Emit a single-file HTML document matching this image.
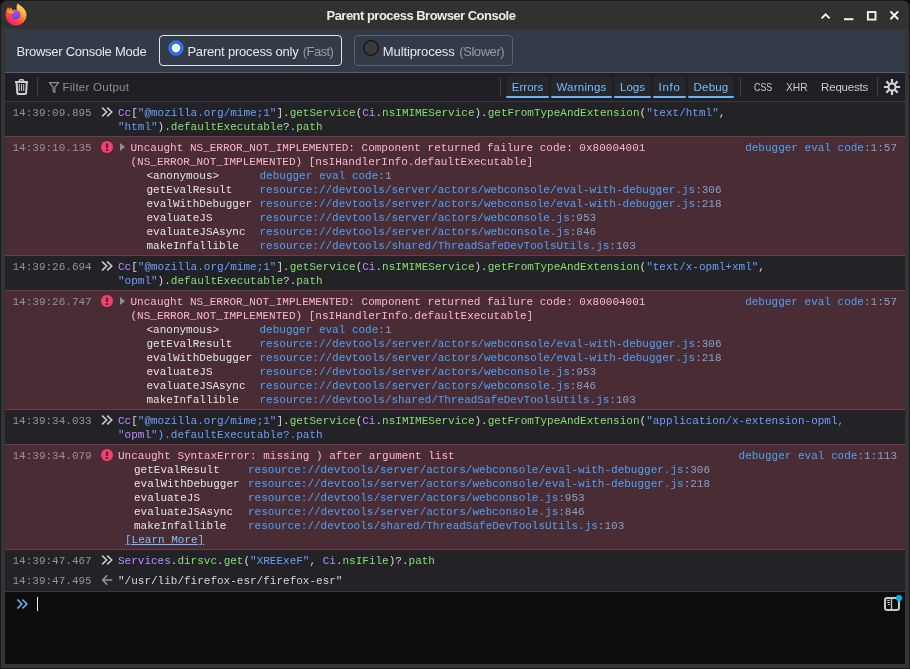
<!DOCTYPE html>
<html><head><meta charset="utf-8">
<style>
html,body{margin:0;padding:0;}
body{width:910px;height:669px;overflow:hidden;position:relative;background:#0a0a0a;font-family:"Liberation Sans",sans-serif;}
#win{position:absolute;left:0;top:0;width:910px;height:669px;box-sizing:border-box;border:1px solid #1b1b1b;border-radius:7px 7px 0 0;background:#353535;}
#title{position:absolute;left:1px;top:1px;width:908px;height:28px;background:#313131;border-radius:6px 6px 0 0;}
#ttext{position:absolute;left:325.5px;top:6.5px;line-height:16px;font-weight:bold;font-size:13px;letter-spacing:-0.52px;color:#ececec;white-space:nowrap;}
#content{position:absolute;left:5px;top:29px;width:900px;height:635px;background:#232327;overflow:hidden;}
#mode{position:absolute;left:0;top:0;width:900px;height:43px;background:#333a48;border-bottom:1px solid #575c69;}
#mode .lbl{position:absolute;left:11.5px;top:14.5px;line-height:16px;font-size:13px;letter-spacing:-0.26px;color:#e8e8ea;white-space:nowrap;}
.mbtn{position:absolute;top:6px;height:31px;box-sizing:border-box;border:1px solid #e6e6e6;border-radius:4px;}
.mbtn .t{position:absolute;top:7.5px;line-height:16px;font-size:13px;color:#e8e8ea;white-space:nowrap;}
.mbtn .g{color:#9a9ca3;}
#toolbar{position:absolute;left:0;top:44px;width:900px;height:28px;background:#201f25;border-bottom:1px solid #38383d;}
.tsep{position:absolute;top:4px;width:1px;height:20px;background:#3c3c41;}
.fbtn{position:absolute;top:3px;height:22px;box-sizing:border-box;background:#26262d;border-radius:3px 3px 1px 1px;color:#75bfff;font-size:11.5px;}
.fbtn:after{content:"";position:absolute;left:0;right:0;bottom:0;height:2px;background:#6db3f2;border-radius:1px;}
.fbtn span{position:absolute;left:0;right:0;text-align:center;top:4px;line-height:14px;white-space:nowrap;}
.tbt{position:absolute;top:7px;line-height:14px;font-size:11.5px;color:#c9c9cc;white-space:nowrap;}
#msgs{position:absolute;left:-5px;top:-29px;width:910px;height:669px;}
.ln{position:absolute;white-space:pre;font-family:"Liberation Mono",monospace;font-size:11px;line-height:14px;height:14px;color:#d7d7db;}
.ts{color:#939395;}
.v{color:#b98eff;}
.p{color:#d7d7db;}
.s{color:#6d9ef7;}
.f{color:#86de74;}
.fn{color:#e4e4e6;}
.loc{color:#4ea1f5;}
.lnum{color:#86a0c8;}
.err{color:#ffb3d2;}
.res{color:#d7d7db;}
.lm{color:#75bfff;text-decoration:underline;}
.ico{position:absolute;}
.errbg{position:absolute;left:5px;width:900px;box-sizing:border-box;background:#4a2c35;border-top:1px solid #6f3b4c;border-bottom:1px solid #6f3b4c;}
.eico{position:absolute;width:12px;height:12px;border-radius:50%;background:#ff3d6e;color:#4a2c35;font:bold 10px/12px "Liberation Sans",sans-serif;text-align:center;}
.tri{position:absolute;width:0;height:0;border-left:5px solid #8e8e90;border-top:4px solid transparent;border-bottom:4px solid transparent;}
#sepbot{position:absolute;left:5px;top:591px;width:900px;height:1px;background:#3a3a3e;}
#input{position:absolute;left:5px;top:592px;width:900px;height:72px;background:#0d0d0e;}
</style></head><body>
<div id="root" style="position:absolute;left:0;top:0;width:910px;height:669px;will-change:transform">
<div id="win"></div>
<div id="title">
  <svg style="position:absolute;left:-1px;top:-1px" width="32" height="30" viewBox="0 0 32 30">
    <defs>
      <linearGradient id="fg1" x1="0.85" y1="0" x2="0.2" y2="1"><stop offset="0" stop-color="#fff44f"/><stop offset="0.38" stop-color="#ffa12e"/><stop offset="0.68" stop-color="#ff4539"/><stop offset="1" stop-color="#e4158c"/></linearGradient>
      <linearGradient id="fg2" x1="0.3" y1="0" x2="0.5" y2="1"><stop offset="0" stop-color="#b13ff0"/><stop offset="0.5" stop-color="#8a4cf5"/><stop offset="1" stop-color="#5945dc"/></linearGradient>
    </defs>
    <path d="M17.8 3.6 C19.5 5.5 26.5 8.5 26.5 15.2 A10.5 10.5 0 0 1 5.5 15.2 C5.5 12 6.8 9.5 8 7 L9.3 9 L11.2 7.4 L12.4 10.2 C13.5 9.6 15.3 9.6 16.9 9.8 C16.4 7.5 16.6 5.2 17.8 3.6 Z" fill="url(#fg1)"/>
    <circle cx="15.8" cy="14.8" r="4.6" fill="url(#fg2)"/>
    <path d="M6.6 10.6 C9 10.2 12 11 14.6 12.3 C13.4 13.7 11.4 14 10 13.4 C8.5 12.8 7.4 11.9 6.6 10.6 Z" fill="#ff9d1e"/>
  </svg>
  <div id="ttext">Parent process Browser Console</div>
  <svg style="position:absolute;left:819px;top:10px" width="80" height="11" viewBox="0 0 80 11">
    <path d="M1.6 7.4 L5.6 3.4 L9.6 7.4" fill="none" stroke="#f2f2f2" stroke-width="2"/>
    <rect x="24" y="7.2" width="9.4" height="2" fill="#f2f2f2"/>
    <rect x="47.9" y="1.0" width="7.6" height="7.6" fill="none" stroke="#f2f2f2" stroke-width="1.9"/>
    <path d="M70.4 0.4 L78.2 8.2 M78.2 0.4 L70.4 8.2" fill="none" stroke="#f2f2f2" stroke-width="2"/>
  </svg>
</div>
<div id="content">
  <div id="mode">
    <div class="lbl">Browser Console Mode</div>
    <div class="mbtn" style="left:154px;width:183px;">
      <svg style="position:absolute;left:8px;top:4px" width="16" height="16" viewBox="0 0 16 16"><circle cx="8" cy="8" r="6" fill="#fff" stroke="#2b73e0" stroke-width="3.6"/></svg>
      <div class="t" style="left:27.4px;letter-spacing:-0.2px">Parent process only</div>
      <div class="t g" style="left:142.7px;letter-spacing:-0.54px">(Fast)</div>
    </div>
    <div class="mbtn" style="left:349px;width:159px;border-color:#5c6170;">
      <svg style="position:absolute;left:8px;top:4px" width="16" height="16" viewBox="0 0 16 16"><circle cx="8" cy="8" r="7.3" fill="#3a3a3a" stroke="#111" stroke-width="1.2"/></svg>
      <div class="t" style="left:27.8px;letter-spacing:-0.1px">Multiprocess</div>
      <div class="t g" style="left:104.3px;letter-spacing:-0.44px">(Slower)</div>
    </div>
  </div>
  <div id="toolbar">
    <svg style="position:absolute;left:9px;top:5px" width="16" height="18" viewBox="0 0 16 18">
      <path d="M1 4 H14" stroke="#cfcfd2" stroke-width="2" fill="none"/>
      <path d="M5.4 3.6 V2.7 Q5.4 1.7 6.4 1.7 H8.6 Q9.6 1.7 9.6 2.7 V3.6" stroke="#cfcfd2" stroke-width="1.4" fill="none"/>
      <path d="M2.6 4 L3.2 14.4 Q3.3 16.1 5 16.1 H10.4 Q12.1 16.1 12.2 14.4 L12.8 4" stroke="#cfcfd2" stroke-width="2" fill="none"/>
      <path d="M5.3 6 V13 M7.5 6 V13 M9.7 6 V13" stroke="#cfcfd2" stroke-width="1" fill="none"/>
    </svg>
    <div class="tsep" style="left:32px"></div>
    <svg style="position:absolute;left:43px;top:8px" width="12" height="13" viewBox="0 0 12 13">
      <path d="M1.3 1.6 H10.7 L6.9 6.2 V11.4 L5.1 10.2 V6.2 Z" fill="none" stroke="#909093" stroke-width="1.2" stroke-linejoin="round"/>
    </svg>
    <div class="tbt" style="left:57.5px;color:#8f8f92;letter-spacing:0.26px">Filter Output</div>
    <div class="tsep" style="left:495px"></div>
    <div class="fbtn" style="left:501px;width:43px"><span>Errors</span></div>
    <div class="fbtn" style="left:546px;width:61px"><span style="letter-spacing:0.25px">Warnings</span></div>
    <div class="fbtn" style="left:609px;width:37px"><span>Logs</span></div>
    <div class="fbtn" style="left:648px;width:33px"><span style="letter-spacing:0.7px">Info</span></div>
    <div class="fbtn" style="left:683px;width:46px"><span style="letter-spacing:0.2px">Debug</span></div>
    <div class="tsep" style="left:735px"></div>
    <div class="tbt" style="left:748.6px;transform:scaleX(0.77);transform-origin:0 0">CSS</div>
    <div class="tbt" style="left:781.1px;transform:scaleX(0.89);transform-origin:0 0">XHR</div>
    <div class="tbt" style="left:816.1px;letter-spacing:-0.2px">Requests</div>
    <div class="tsep" style="left:872px"></div>
    <svg style="position:absolute;left:878px;top:5px" width="18" height="18" viewBox="0 0 18 18">
      <circle cx="9" cy="9" r="3.5" fill="none" stroke="#d2d2d4" stroke-width="2"/>
      <g stroke="#d2d2d4" stroke-width="2.2">
        <path d="M9 0.9 V5 M9 13 V17.1 M0.9 9 H5 M13 9 H17.1"/>
        <path d="M3.4 3.4 L6.2 6.2 M11.8 11.8 L14.6 14.6 M14.6 3.4 L11.8 6.2 M6.2 11.8 L3.4 14.6"/>
      </g>
    </svg>
  </div>
</div>
<div id="sepbot"></div>
<div id="input">
  <svg style="position:absolute;left:10px;top:6px" width="16" height="12" viewBox="0 0 16 12"><path d="M2.4 1.5 L6.8 6 L2.4 10.5 M7.4 1.5 L11.8 6 L7.4 10.5" fill="none" stroke="#6db3f5" stroke-width="1.6"/></svg>
  <div style="position:absolute;left:32px;top:5px;width:1px;height:14px;background:#f0f0f0"></div>
  <svg style="position:absolute;left:878px;top:0px" width="24" height="22" viewBox="0 0 24 22">
    <rect x="2" y="6" width="14" height="12" rx="2.2" fill="none" stroke="#c8c8ca" stroke-width="2"/>
    <path d="M8.5 6 V18" stroke="#c8c8ca" stroke-width="1.3"/>
    <path d="M4.5 8.4 H6.6 M4.5 10.5 H6.6 M5.3 12.5 H6.6" stroke="#c8c8ca" stroke-width="1" stroke-linecap="round"/>
    <circle cx="16" cy="6" r="3.1" fill="#00b0f4"/>
  </svg>
</div>
<div class="ln" style="top:106px;left:12.5px;"><span class="ts">14:39:09.895</span></div>
<svg class="ico" style="left:100px;top:107px" width="14" height="11" viewBox="0 0 14 11"><path d="M2.1 0.6 L6.7 5 L2.1 9.4 M7.2 0.6 L11.8 5 L7.2 9.4" fill="none" stroke="#cfcfd2" stroke-width="1.5"/></svg><div class="ln" style="top:106px;left:118px;"><span class="v">Cc</span><span class="p">[</span><span class="s">"@mozilla.org/mime;1"</span><span class="p">].</span><span class="f">getService</span><span class="p">(</span><span class="v">Ci</span><span class="p">.</span><span class="f">nsIMIMEService</span><span class="p">).</span><span class="f">getFromTypeAndExtension</span><span class="p">(</span><span class="s">"text/html"</span><span class="p">,</span></div>
<div class="ln" style="top:120px;left:118px;"><span class="s">"html"</span><span class="p">).</span><span class="f">defaultExecutable</span><span class="p">?.</span><span class="f">path</span></div>
<div class="errbg" style="top:136px;height:120px"></div>
<div class="ln" style="top:141px;left:12.5px;"><span class="ts">14:39:10.135</span></div>
<svg class="ico" style="left:101px;top:141px" width="12" height="12" viewBox="0 0 12 12"><circle cx="6" cy="6" r="6" fill="#ff3d6e"/><rect x="4.85" y="2.4" width="2.3" height="4.6" rx="0.6" fill="#4a2c35"/><rect x="4.85" y="8" width="2.3" height="2" rx="0.4" fill="#4a2c35"/></svg><div class="tri" style="left:120px;top:143px"></div><div class="ln" style="top:141px;left:130.5px;"><span class="err">Uncaught NS_ERROR_NOT_IMPLEMENTED: Component returned failure code: 0x80004001</span></div>
<div class="ln" style="top:141px;right:13px"><span class="loc">debugger eval code</span><span class="lnum">:1:57</span></div>
<div class="ln" style="top:155px;left:130.5px;"><span class="err">(NS_ERROR_NOT_IMPLEMENTED) [nsIHandlerInfo.defaultExecutable]</span></div>
<div class="ln" style="top:169px;left:146.5px;"><span class="fn">&lt;anonymous&gt;</span></div>
<div class="ln" style="top:169px;left:259.5px;"><span class="loc">debugger eval code</span><span class="lnum">:1</span></div>
<div class="ln" style="top:183px;left:146.5px;"><span class="fn">getEvalResult</span></div>
<div class="ln" style="top:183px;left:259.5px;"><span class="loc">resource://devtools/server/actors/webconsole/eval-with-debugger.js</span><span class="lnum">:306</span></div>
<div class="ln" style="top:197px;left:146.5px;"><span class="fn">evalWithDebugger</span></div>
<div class="ln" style="top:197px;left:259.5px;"><span class="loc">resource://devtools/server/actors/webconsole/eval-with-debugger.js</span><span class="lnum">:218</span></div>
<div class="ln" style="top:211px;left:146.5px;"><span class="fn">evaluateJS</span></div>
<div class="ln" style="top:211px;left:259.5px;"><span class="loc">resource://devtools/server/actors/webconsole.js</span><span class="lnum">:953</span></div>
<div class="ln" style="top:225px;left:146.5px;"><span class="fn">evaluateJSAsync</span></div>
<div class="ln" style="top:225px;left:259.5px;"><span class="loc">resource://devtools/server/actors/webconsole.js</span><span class="lnum">:846</span></div>
<div class="ln" style="top:239px;left:146.5px;"><span class="fn">makeInfallible</span></div>
<div class="ln" style="top:239px;left:259.5px;"><span class="loc">resource://devtools/shared/ThreadSafeDevToolsUtils.js</span><span class="lnum">:103</span></div>
<div class="ln" style="top:260px;left:12.5px;"><span class="ts">14:39:26.694</span></div>
<svg class="ico" style="left:100px;top:261px" width="14" height="11" viewBox="0 0 14 11"><path d="M2.1 0.6 L6.7 5 L2.1 9.4 M7.2 0.6 L11.8 5 L7.2 9.4" fill="none" stroke="#cfcfd2" stroke-width="1.5"/></svg><div class="ln" style="top:260px;left:118px;"><span class="v">Cc</span><span class="p">[</span><span class="s">"@mozilla.org/mime;1"</span><span class="p">].</span><span class="f">getService</span><span class="p">(</span><span class="v">Ci</span><span class="p">.</span><span class="f">nsIMIMEService</span><span class="p">).</span><span class="f">getFromTypeAndExtension</span><span class="p">(</span><span class="s">"text/x-opml+xml"</span><span class="p">,</span></div>
<div class="ln" style="top:274px;left:118px;"><span class="s">"opml"</span><span class="p">).</span><span class="f">defaultExecutable</span><span class="p">?.</span><span class="f">path</span></div>
<div class="errbg" style="top:290px;height:120px"></div>
<div class="ln" style="top:295px;left:12.5px;"><span class="ts">14:39:26.747</span></div>
<svg class="ico" style="left:101px;top:295px" width="12" height="12" viewBox="0 0 12 12"><circle cx="6" cy="6" r="6" fill="#ff3d6e"/><rect x="4.85" y="2.4" width="2.3" height="4.6" rx="0.6" fill="#4a2c35"/><rect x="4.85" y="8" width="2.3" height="2" rx="0.4" fill="#4a2c35"/></svg><div class="tri" style="left:120px;top:297px"></div><div class="ln" style="top:295px;left:130.5px;"><span class="err">Uncaught NS_ERROR_NOT_IMPLEMENTED: Component returned failure code: 0x80004001</span></div>
<div class="ln" style="top:295px;right:13px"><span class="loc">debugger eval code</span><span class="lnum">:1:57</span></div>
<div class="ln" style="top:309px;left:130.5px;"><span class="err">(NS_ERROR_NOT_IMPLEMENTED) [nsIHandlerInfo.defaultExecutable]</span></div>
<div class="ln" style="top:323px;left:146.5px;"><span class="fn">&lt;anonymous&gt;</span></div>
<div class="ln" style="top:323px;left:259.5px;"><span class="loc">debugger eval code</span><span class="lnum">:1</span></div>
<div class="ln" style="top:337px;left:146.5px;"><span class="fn">getEvalResult</span></div>
<div class="ln" style="top:337px;left:259.5px;"><span class="loc">resource://devtools/server/actors/webconsole/eval-with-debugger.js</span><span class="lnum">:306</span></div>
<div class="ln" style="top:351px;left:146.5px;"><span class="fn">evalWithDebugger</span></div>
<div class="ln" style="top:351px;left:259.5px;"><span class="loc">resource://devtools/server/actors/webconsole/eval-with-debugger.js</span><span class="lnum">:218</span></div>
<div class="ln" style="top:365px;left:146.5px;"><span class="fn">evaluateJS</span></div>
<div class="ln" style="top:365px;left:259.5px;"><span class="loc">resource://devtools/server/actors/webconsole.js</span><span class="lnum">:953</span></div>
<div class="ln" style="top:379px;left:146.5px;"><span class="fn">evaluateJSAsync</span></div>
<div class="ln" style="top:379px;left:259.5px;"><span class="loc">resource://devtools/server/actors/webconsole.js</span><span class="lnum">:846</span></div>
<div class="ln" style="top:393px;left:146.5px;"><span class="fn">makeInfallible</span></div>
<div class="ln" style="top:393px;left:259.5px;"><span class="loc">resource://devtools/shared/ThreadSafeDevToolsUtils.js</span><span class="lnum">:103</span></div>
<div class="ln" style="top:414px;left:12.5px;"><span class="ts">14:39:34.033</span></div>
<svg class="ico" style="left:100px;top:415px" width="14" height="11" viewBox="0 0 14 11"><path d="M2.1 0.6 L6.7 5 L2.1 9.4 M7.2 0.6 L11.8 5 L7.2 9.4" fill="none" stroke="#cfcfd2" stroke-width="1.5"/></svg><div class="ln" style="top:414px;left:118px;"><span class="v">Cc</span><span class="p">[</span><span class="s">"@mozilla.org/mime;1"</span><span class="p">].</span><span class="f">getService</span><span class="p">(</span><span class="v">Ci</span><span class="p">.</span><span class="f">nsIMIMEService</span><span class="p">).</span><span class="f">getFromTypeAndExtension</span><span class="p">(</span><span class="s">"application/x-extension-opml,</span></div>
<div class="ln" style="top:428px;left:118px;"><span class="s">"</span><span class="v">opml</span><span class="s">").defaultExecutable?.path</span></div>
<div class="errbg" style="top:444px;height:106px"></div>
<div class="ln" style="top:449px;left:12.5px;"><span class="ts">14:39:34.079</span></div>
<svg class="ico" style="left:101px;top:449px" width="12" height="12" viewBox="0 0 12 12"><circle cx="6" cy="6" r="6" fill="#ff3d6e"/><rect x="4.85" y="2.4" width="2.3" height="4.6" rx="0.6" fill="#4a2c35"/><rect x="4.85" y="8" width="2.3" height="2" rx="0.4" fill="#4a2c35"/></svg><div class="ln" style="top:449px;left:118px;"><span class="err">Uncaught SyntaxError: missing ) after argument list</span></div>
<div class="ln" style="top:449px;right:13px"><span class="loc">debugger eval code</span><span class="lnum">:1:113</span></div>
<div class="ln" style="top:463px;left:134px;"><span class="fn">getEvalResult</span></div>
<div class="ln" style="top:463px;left:248px;"><span class="loc">resource://devtools/server/actors/webconsole/eval-with-debugger.js</span><span class="lnum">:306</span></div>
<div class="ln" style="top:477px;left:134px;"><span class="fn">evalWithDebugger</span></div>
<div class="ln" style="top:477px;left:248px;"><span class="loc">resource://devtools/server/actors/webconsole/eval-with-debugger.js</span><span class="lnum">:218</span></div>
<div class="ln" style="top:491px;left:134px;"><span class="fn">evaluateJS</span></div>
<div class="ln" style="top:491px;left:248px;"><span class="loc">resource://devtools/server/actors/webconsole.js</span><span class="lnum">:953</span></div>
<div class="ln" style="top:505px;left:134px;"><span class="fn">evaluateJSAsync</span></div>
<div class="ln" style="top:505px;left:248px;"><span class="loc">resource://devtools/server/actors/webconsole.js</span><span class="lnum">:846</span></div>
<div class="ln" style="top:519px;left:134px;"><span class="fn">makeInfallible</span></div>
<div class="ln" style="top:519px;left:248px;"><span class="loc">resource://devtools/shared/ThreadSafeDevToolsUtils.js</span><span class="lnum">:103</span></div>
<div class="ln" style="top:533px;left:125px;"><span class="lm">[Learn More]</span></div>
<div class="ln" style="top:554px;left:12.5px;"><span class="ts">14:39:47.467</span></div>
<svg class="ico" style="left:100px;top:555px" width="14" height="11" viewBox="0 0 14 11"><path d="M2.1 0.6 L6.7 5 L2.1 9.4 M7.2 0.6 L11.8 5 L7.2 9.4" fill="none" stroke="#cfcfd2" stroke-width="1.5"/></svg><div class="ln" style="top:554px;left:118px;"><span class="v">Services</span><span class="p">.</span><span class="f">dirsvc</span><span class="p">.</span><span class="f">get</span><span class="p">(</span><span class="s">"XREExeF"</span><span class="p">, </span><span class="v">Ci</span><span class="p">.</span><span class="f">nsIFile</span><span class="p">)?.</span><span class="f">path</span></div>
<div class="ln" style="top:574px;left:12.5px;"><span class="ts">14:39:47.495</span></div>
<svg class="ico" style="left:100px;top:574px" width="14" height="12" viewBox="0 0 14 12"><path d="M7.2 1.2 L2.8 6 L7.2 10.8 M2.8 6 H12.2" fill="none" stroke="#949496" stroke-width="1.7"/></svg><div class="ln" style="top:574px;left:118px;"><span class="res">"/usr/lib/firefox-esr/firefox-esr"</span></div>

</div>
</body></html>
